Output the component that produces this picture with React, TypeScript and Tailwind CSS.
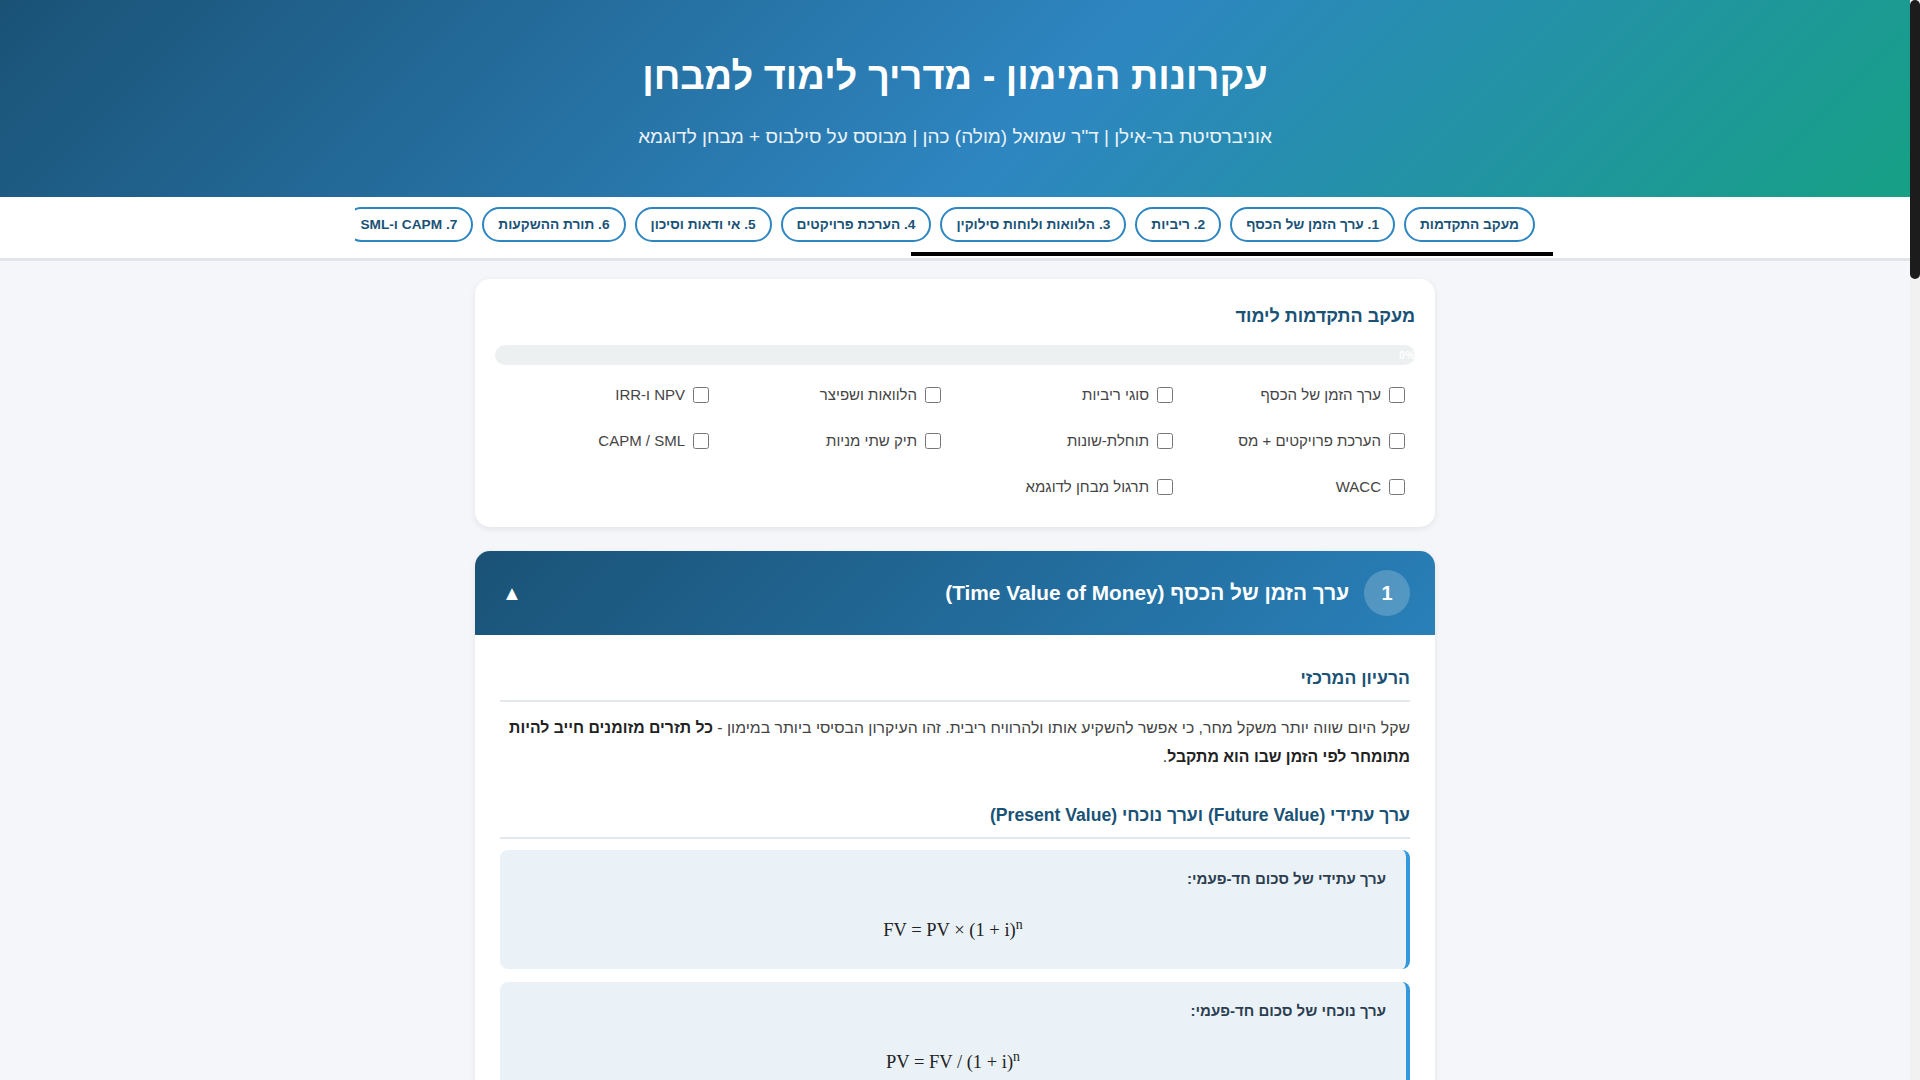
import { useState } from 'react'

const navItems = [
  'מעקב התקדמות',
  '1. ערך הזמן של הכסף',
  '2. ריביות',
  '3. הלוואות ולוחות סילוקין',
  '4. הערכת פרויקטים',
  '5. אי ודאות וסיכון',
  '6. תורת ההשקעות',
  '7. CAPM ו-SML',
  '8. WACC ומבנה הון',
  '9. שוק ההון',
  '10. נוסחאות מרכזיות',
  '11. תרגול מבחן לדוגמא',
  '12. טעויות נפוצות',
  '13. סיכום',
]

const topics = [
  'ערך הזמן של הכסף',
  'סוגי ריביות',
  'הלוואות ושפיצר',
  'NPV ו-IRR',
  'הערכת פרויקטים + מס',
  'תוחלת-שונות',
  'תיק שתי מניות',
  'CAPM / SML',
  'WACC',
  'תרגול מבחן לדוגמא',
]

const sections = [
  'ריביות (נומינלית, אפקטיבית, ריאלית)',
  'הלוואות ולוחות סילוקין',
  'הערכת פרויקטים (NPV, IRR)',
  'אי ודאות וסיכון',
  'תורת ההשקעות (תיק שתי מניות)',
  'CAPM ו-SML',
  'WACC ומבנה הון',
  'תרגול מבחן לדוגמא',
]

function FormulaBox({ label, children }: { label: string; children: React.ReactNode }) {
  return (
    <div className="bg-[#eaf2f8] border-r-4 border-[#3498db] rounded-lg pt-5 px-5 pb-[19px] mb-[13px]">
      <div className="text-[15px] font-bold text-[#2c3e50] leading-[18px]">{label}</div>
      <div
        dir="ltr"
        className="text-center text-[18.5px] text-[#222] mt-[30px] mb-[8px] leading-[24px] font-['Liberation_Serif',serif]"
      >
        {children}
      </div>
    </div>
  )
}

function SubHeading({ children }: { children: React.ReactNode }) {
  return (
    <h3 className="text-[17.6px] font-bold text-[#1a5276] pb-[10px] mb-[11px] border-b-2 border-[#e3e8ee] leading-[23px]">
      {children}
    </h3>
  )
}

export default function App() {
  const [checked, setChecked] = useState<boolean[]>(topics.map(() => false))
  const done = checked.filter(Boolean).length
  const pct = Math.round((done / topics.length) * 100)

  return (
    <div className="h-screen flex bg-[#f4f6f9] font-['Liberation_Sans',Arial,sans-serif]">
      <div dir="rtl" className="flex-1 min-w-0 overflow-y-auto">
        {/* Header */}
        <header className="bg-[linear-gradient(135deg,#1a5276_0%,#2e86c1_55%,#16a085_100%)] text-white text-center pt-[53px] pb-[48px]">
          <h1 className="text-[38px] font-bold leading-[46px]">עקרונות המימון - מדריך לימוד למבחן</h1>
          <p className="text-[19px] leading-[24px] mt-[26px] opacity-90">
            אוניברסיטת בר-אילן | ד"ר שמואל (מולה) כהן | מבוסס על סילבוס + מבחן לדוגמא
          </p>
        </header>

        {/* Nav */}
        <nav className="bg-white border-b-[3px] border-[#e1e4e8]">
          <div className="max-w-[1200px] mx-auto">
            <div className="flex gap-[9px] overflow-hidden px-5 pt-[10px] pb-[10px]">
              {navItems.map((item) => (
                <button
                  key={item}
                  className="shrink-0 whitespace-nowrap rounded-full border-2 border-[#2e86c1] bg-white px-[14px] py-[7px] text-[13.7px] leading-[17px] font-bold text-[#1a5276]"
                >
                  {item}
                </button>
              ))}
            </div>
            {/* scroll thumb */}
            <div className="flex pr-[2px] pb-[2px]">
              <div className="w-[642px] h-[4px] bg-black" />
            </div>
          </div>
        </nav>

        <main className="max-w-[960px] mx-auto pt-[18px] pb-12">
          {/* Progress card */}
          <div className="bg-white rounded-[15px] shadow-[0_2px_6px_rgba(0,0,0,0.08)] px-5 pt-[26px] pb-[25px] mb-[24px]">
            <h2 className="text-[18px] font-bold text-[#1a5276] leading-[23px] mb-[17px]">מעקב התקדמות לימוד</h2>
            <div className="h-[20px] rounded-full bg-[#ecf0f1] overflow-hidden">
              <div
                className="h-full bg-[linear-gradient(90deg,#27ae60,#2ecc71)] text-white text-[11px] leading-[20px] font-bold whitespace-nowrap"
                style={{ width: `${pct}%` }}
              >
                {pct}%
              </div>
            </div>
            <div className="grid grid-cols-4 gap-x-2 gap-y-[16px] mt-[15px]">
              {topics.map((t, i) => (
                <label
                  key={t}
                  className="flex items-center gap-2 px-[10px] py-[7px] text-[15px] text-[#444] leading-[16px]"
                >
                  <input
                    type="checkbox"
                    className="w-[16px] h-[16px] m-0"
                    checked={checked[i]}
                    onChange={() => setChecked(checked.map((c, j) => (j === i ? !c : c)))}
                  />
                  <span>{t}</span>
                </label>
              ))}
            </div>
          </div>

          {/* Section 1 */}
          <section className="bg-white rounded-[15px] shadow-[0_2px_6px_rgba(0,0,0,0.08)] overflow-hidden mb-[24px]">
            <div className="bg-[linear-gradient(135deg,#1a5276,#2980b9)] text-white flex items-center px-[25px] py-[19px]">
              <div className="w-[46px] h-[46px] rounded-full bg-white/20 flex items-center justify-center text-[20px] font-bold">
                1
              </div>
              <h2 className="text-[20.8px] font-bold mr-[15px]">ערך הזמן של הכסף (Time Value of Money)</h2>
              <span className="mr-auto text-[20px] leading-none pl-[2px]">▲</span>
            </div>

            <div className="px-[25px] pt-[32px] pb-[25px]">
              <SubHeading>הרעיון המרכזי</SubHeading>
              <p className="text-[15.8px] leading-[29px] text-[#444] mb-[33px]">
                שקל היום שווה יותר משקל מחר, כי אפשר להשקיע אותו ולהרוויח ריבית. זהו העיקרון הבסיסי ביותר במימון -{' '}
                <strong className="text-[#222]">כל תזרים מזומנים חייב להיות מתומחר לפי הזמן שבו הוא מתקבל</strong>.
              </p>

              <SubHeading>ערך עתידי (Future Value) וערך נוכחי (Present Value)</SubHeading>
              <FormulaBox label="ערך עתידי של סכום חד-פעמי:">
                FV = PV × (1 + i)<sup>n</sup>
              </FormulaBox>
              <FormulaBox label="ערך נוכחי של סכום חד-פעמי:">
                PV = FV / (1 + i)<sup>n</sup>
              </FormulaBox>
              <p className="text-[15.8px] leading-[29px] text-[#444] mb-[33px]">
                כאשר i הוא שיעור הריבית לתקופה ו-n הוא מספר התקופות. ככל שהריבית גבוהה יותר או שהתקופה ארוכה יותר, הערך
                הנוכחי של תזרים עתידי נמוך יותר.
              </p>

              <SubHeading>אנונה (Annuity) - תזרים קבוע</SubHeading>
              <FormulaBox label="ערך נוכחי של אנונה רגילה:">
                PV = C × [1 - (1 + i)<sup>-n</sup>] / i
              </FormulaBox>
              <FormulaBox label="ערך עתידי של אנונה רגילה:">
                FV = C × [(1 + i)<sup>n</sup> - 1] / i
              </FormulaBox>
              <FormulaBox label="ערך נוכחי של פרפטואיטי (תזרים אינסופי):">PV = C / i</FormulaBox>
              <FormulaBox label="פרפטואיטי עם צמיחה קבועה:">
                PV = C<sub>1</sub> / (i - g)
              </FormulaBox>

              <SubHeading>דוגמה מספרית</SubHeading>
              <div className="bg-[#fef9e7] border-r-4 border-[#f39c12] rounded-lg p-5 mb-[13px] text-[15px] leading-[27px] text-[#444]">
                <strong className="text-[#2c3e50]">שאלה:</strong> כמה יש להפקיד היום כדי לקבל 10,000 ₪ בעוד 5 שנים, בריבית
                שנתית של 6%?
                <br />
                <strong className="text-[#2c3e50]">פתרון:</strong> PV = 10,000 / (1.06)<sup>5</sup> = 7,472.58 ₪
              </div>
              <div className="bg-[#fdedec] border-r-4 border-[#e74c3c] rounded-lg p-5 text-[15px] leading-[27px] text-[#444]">
                <strong className="text-[#c0392b]">טעות נפוצה:</strong> לבלבל בין אנונה רגילה (תשלום בסוף תקופה) לבין אנונה
                מיידית (תשלום בתחילת תקופה). באנונה מיידית יש להכפיל את התוצאה ב-(1 + i).
              </div>
            </div>
          </section>

          {/* Collapsed sections */}
          {sections.map((s, i) => (
            <section
              key={s}
              className="bg-white rounded-[15px] shadow-[0_2px_6px_rgba(0,0,0,0.08)] overflow-hidden mb-[24px]"
            >
              <div className="bg-[linear-gradient(135deg,#1a5276,#2980b9)] text-white flex items-center px-[25px] py-[19px]">
                <div className="w-[46px] h-[46px] rounded-full bg-white/20 flex items-center justify-center text-[20px] font-bold">
                  {i + 2}
                </div>
                <h2 className="text-[20.8px] font-bold mr-[15px]">{s}</h2>
                <span className="mr-auto text-[20px] leading-none pl-[2px]">▼</span>
              </div>
            </section>
          ))}
        </main>

        <footer className="text-center text-[14px] text-[#7f8c8d] pb-10">
          מדריך לימוד - עקרונות המימון | בהצלחה במבחן!
        </footer>
      </div>

      {/* page scrollbar */}
      <div className="w-[10px] shrink-0 bg-[#f1f1f1]">
        <div className="h-[279px] bg-[#1c1c1c] rounded-full" />
      </div>
    </div>
  )
}
